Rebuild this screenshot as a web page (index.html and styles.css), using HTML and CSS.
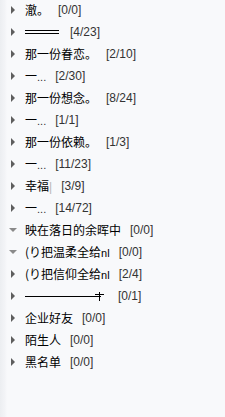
FILE: index.html
```html
<!DOCTYPE html>
<html>
<head>
<meta charset="utf-8">
<link rel="stylesheet" href="styles.css">
</head>
<body>
<ul class="groups">
  <li class="row"><span class="arrow"></span><span class="name">澈。</span><span class="count">[0/0]</span></li>
  <li class="row"><span class="arrow"></span><span class="name dbl"></span><span class="count">[4/23]</span></li>
  <li class="row"><span class="arrow"></span><span class="name">那一份眷恋。</span><span class="count">[2/10]</span></li>
  <li class="row"><span class="arrow"></span><span class="name">一<span class="dots">...</span></span><span class="count">[2/30]</span></li>
  <li class="row"><span class="arrow"></span><span class="name">那一份想念。</span><span class="count">[8/24]</span></li>
  <li class="row"><span class="arrow"></span><span class="name">一<span class="dots">...</span></span><span class="count">[1/1]</span></li>
  <li class="row"><span class="arrow"></span><span class="name">那一份依赖。</span><span class="count">[1/3]</span></li>
  <li class="row"><span class="arrow"></span><span class="name">一<span class="dots">...</span></span><span class="count">[11/23]</span></li>
  <li class="row"><span class="arrow"></span><span class="name">幸福<span class="bar">|</span></span><span class="count">[3/9]</span></li>
  <li class="row"><span class="arrow"></span><span class="name">一<span class="dots">...</span></span><span class="count">[14/72]</span></li>
  <li class="row"><span class="arrow open"></span><span class="name">映在落日的余晖中</span><span class="count">[0/0]</span></li>
  <li class="row"><span class="arrow open"></span><span class="name">(り把温柔全给<span class="latin">nl</span></span><span class="count">[0/0]</span></li>
  <li class="row"><span class="arrow"></span><span class="name">(り把信仰全给<span class="latin">nl</span></span><span class="count">[2/4]</span></li>
  <li class="row"><span class="arrow"></span><span class="name line"><span class="cross"></span></span><span class="count">[0/1]</span></li>
  <li class="row"><span class="arrow"></span><span class="name">企业好友</span><span class="count">[0/0]</span></li>
  <li class="row"><span class="arrow"></span><span class="name">陌生人</span><span class="count">[0/0]</span></li>
  <li class="row"><span class="arrow"></span><span class="name">黑名单</span><span class="count">[0/0]</span></li>
</ul>
</body>
</html>
```
FILE: styles.css
```css
html, body {
  margin: 0;
  padding: 0;
  height: 100%;
}
body {
  background: linear-gradient(to right, #eceef1 0px, #f3f4f7 5px, #f8f9fb 7px, #f8f9fb 100%);
  font-family: "Noto Sans CJK SC", "Liberation Sans", sans-serif;
  font-size: 12px;
  color: #000;
}
.groups {
  list-style: none;
  margin: -1px 0 0 0;
  padding: 0;
}
.row {
  display: flex;
  align-items: center;
  height: 22px;
  white-space: nowrap;
}
.arrow {
  width: 25px;
  flex: none;
  position: relative;
  height: 22px;
}
.arrow::before {
  content: "";
  position: absolute;
  left: 11px;
  top: 7px;
  border-left: 4px solid #5e5e5e;
  border-top: 4px solid transparent;
  border-bottom: 4px solid transparent;
}
.arrow.open::before {
  left: 9px;
  top: 9px;
  border-left: 4px solid transparent;
  border-right: 4px solid transparent;
  border-top: 4px solid #8a8a8a;
  border-bottom: 0;
}
.name {
  line-height: 22px;
  margin-right: 9px;
}
.dots {
  font-family: "Liberation Sans", sans-serif;
  font-size: 11px;
  color: #333;
}
.bar {
  font-family: "Liberation Sans", sans-serif;
  color: #b8b8b8;
}
.latin {
  font-family: "Liberation Sans", sans-serif;
  font-size: 11px;
}
.count {
  font-family: "Liberation Sans", sans-serif;
  font-size: 12px;
  color: #333;
}
.dbl {
  width: 34px;
  height: 4px;
  border-top: 1px solid #000;
  border-bottom: 1px solid #000;
  box-sizing: border-box;
  margin-right: 11px;
}
.line {
  width: 76px;
  height: 1px;
  background: #000;
  position: relative;
  margin-right: 17px;
}
.cross {
  position: absolute;
  right: 1px;
  top: -4px;
  width: 1px;
  height: 9px;
  background: #000;
}
.cross::after {
  content: "";
  position: absolute;
  left: -4px;
  top: 2px;
  width: 9px;
  height: 1px;
  background: #000;
}
```
